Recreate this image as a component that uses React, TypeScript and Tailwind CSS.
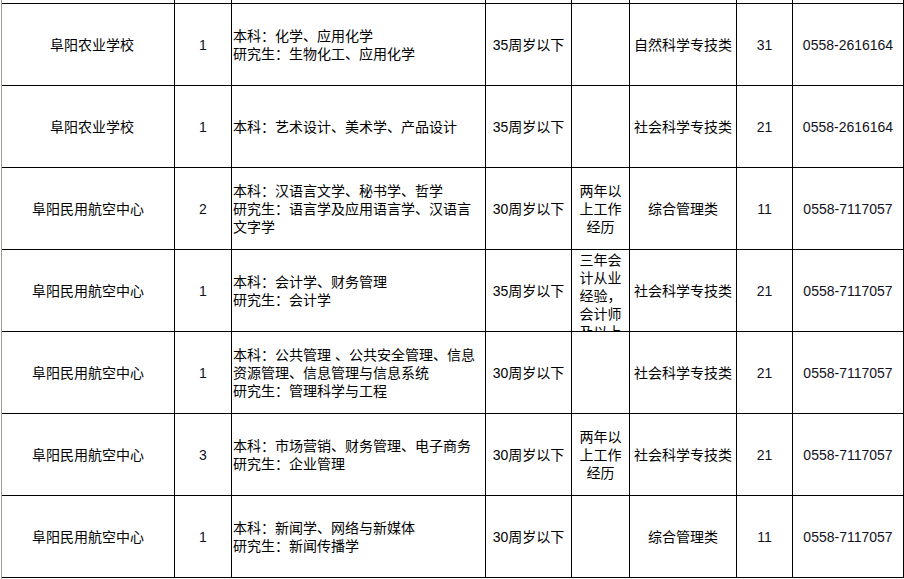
import React from 'react'

interface Post {
  unit: string;
  count: string;
  major: string[];
  age: string;
  other: string[];
  category: string;
  code: string;
  phone: string;
  indent?: boolean;
  clip?: boolean;
}

const posts: Post[] = [
  {
    unit: '阜阳农业学校', count: '1', indent: true,
    major: ['本科：化学、应用化学', '研究生：生物化工、应用化学'],
    age: '35周岁以下', other: [], category: '自然科学专技类', code: '31', phone: '0558-2616164',
  },
  {
    unit: '阜阳农业学校', count: '1', indent: true,
    major: ['本科：艺术设计、美术学、产品设计'],
    age: '35周岁以下', other: [], category: '社会科学专技类', code: '21', phone: '0558-2616164',
  },
  {
    unit: '阜阳民用航空中心', count: '2',
    major: ['本科：汉语言文学、秘书学、哲学', '研究生：语言学及应用语言学、汉语言', '文字学'],
    age: '30周岁以下', other: ['两年以', '上工作', '经历'], category: '综合管理类', code: '11', phone: '0558-7117057',
  },
  {
    unit: '阜阳民用航空中心', count: '1', clip: true,
    major: ['本科：会计学、财务管理', '研究生：会计学'],
    age: '35周岁以下', other: ['三年会', '计从业', '经验，', '会计师', '及以上'], category: '社会科学专技类', code: '21', phone: '0558-7117057',
  },
  {
    unit: '阜阳民用航空中心', count: '1',
    major: ['本科：公共管理 、公共安全管理、信息', '资源管理、信息管理与信息系统', '研究生：管理科学与工程'],
    age: '30周岁以下', other: [], category: '社会科学专技类', code: '21', phone: '0558-7117057',
  },
  {
    unit: '阜阳民用航空中心', count: '3',
    major: ['本科：市场营销、财务管理、电子商务', '研究生：企业管理'],
    age: '30周岁以下', other: ['两年以', '上工作', '经历'], category: '社会科学专技类', code: '21', phone: '0558-7117057',
  },
  {
    unit: '阜阳民用航空中心', count: '1',
    major: ['本科：新闻学、网络与新媒体', '研究生：新闻传播学'],
    age: '30周岁以下', other: [], category: '综合管理类', code: '11', phone: '0558-7117057',
  },
]

const cell = 'border-r border-b border-black flex items-center justify-center text-center overflow-hidden'

export default function App() {
  return (
    <div
      className="flex h-[579px] w-[904px] overflow-hidden bg-white text-[14px] leading-[18px] text-black"
      style={{ fontFamily: '"Liberation Sans", "Noto Sans CJK SC", sans-serif' }}
    >
      {/* sheet edge */}
      <div className="ml-[1px] w-[1px] shrink-0 bg-[#a39e93]" />

      <div className="grid grid-cols-[173px_57px_254px_86px_58px_107px_56px_111px] grid-rows-[4px_repeat(7,82px)] content-start">
        {/* tail of the row above */}
        {Array.from({ length: 8 }).map((_, i) => (
          <div key={i} className="border-r border-b border-black" />
        ))}

        {posts.map((p, i) => (
          <React.Fragment key={i}>
            <div className={`${cell} ${p.indent ? 'pl-[8px]' : ''}`}>{p.unit}</div>
            <div className={`${cell} text-[#111122]`}>{p.count}</div>
            <div className="border-r border-b border-black flex flex-col justify-center pl-[1px] overflow-hidden">
              {p.major.map((line, j) => (
                <span key={j} className="whitespace-pre">{line}</span>
              ))}
            </div>
            <div className={cell}>{p.age}</div>
            <div className={`border-r border-b border-black flex flex-col items-center overflow-hidden ${p.clip ? 'justify-start pt-[1px]' : 'justify-center'}`}>
              {p.other.map((line, j) => (
                <span key={j} className="whitespace-nowrap">{line}</span>
              ))}
            </div>
            <div className={cell}>{p.category}</div>
            <div className={`${cell} text-[#111122]`}>{p.code}</div>
            <div className={`${cell} text-[#111122]`}>{p.phone}</div>
          </React.Fragment>
        ))}
      </div>
    </div>
  )
}
